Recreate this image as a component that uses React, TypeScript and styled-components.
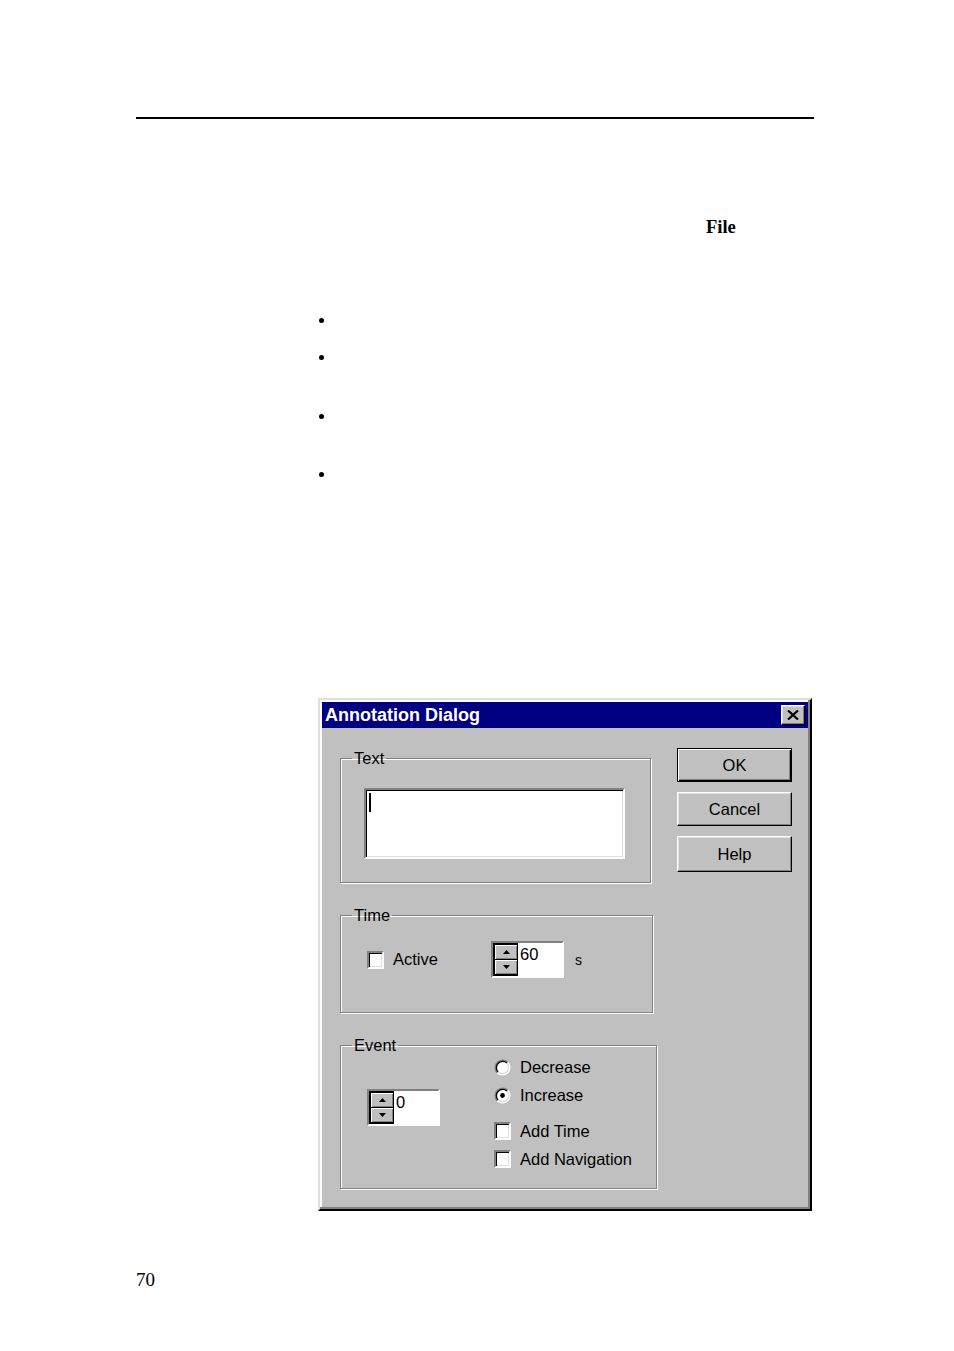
import React from 'react';
import styled, { createGlobalStyle, css } from 'styled-components';

const GlobalStyle = createGlobalStyle`
  html, body {
    margin: 0;
    padding: 0;
    background: #fff;
  }
  body {
    font-family: "Liberation Serif", "Times New Roman", serif;
  }
`;

const Page = styled.div`
  width: 954px;
  min-height: 1351px;
  padding-left: 136px;
  box-sizing: border-box;
  display: flex;
  flex-direction: column;
  align-items: flex-start;
`;

const HeaderRule = styled.hr`
  margin: 117px 0 0;
  width: 678px;
  height: 2px;
  border: none;
  background: #000;
`;

const MenuRef = styled.p`
  margin: 98px 0 0 570px;
  font: bold 18.5px/20px "Liberation Serif", "Times New Roman", serif;
  color: #000;
`;

const BulletList = styled.ul`
  list-style: none;
  margin: 0 0 0 183px;
  padding: 0;
  display: flex;
  flex-direction: column;
`;

const Bullet = styled.li<{ $top: number }>`
  width: 5px;
  height: 5px;
  border-radius: 50%;
  background: #000;
  margin-top: ${(p) => p.$top}px;
`;

const PageNumber = styled.p`
  margin: 59px 0 0;
  font: 19px/20px "Liberation Serif", "Times New Roman", serif;
  color: #000;
`;

/* ---- dialog ---- */

const Dialog = styled.div`
  margin: 221px 0 0 182px;
  width: 494px;
  height: 513px;
  box-sizing: border-box;
  border: 2px solid;
  border-color: #dfdfdf #000 #000 #dfdfdf;
  padding: 2px;
  background: #c0c0c0;
  box-shadow: inset -2px -2px 0 #808080, inset 2px 2px 0 #fff;
  display: flex;
  flex-direction: column;
  font-family: "Liberation Sans", Arial, sans-serif;
  font-size: 16.5px;
  color: #000;
`;

const TitleBar = styled.div`
  height: 26px;
  flex: none;
  background: #000080;
  display: flex;
  align-items: center;
  justify-content: space-between;
  padding: 0 3px 0 3px;
`;

const TitleText = styled.span`
  font: bold 18px/26px "Liberation Sans", Arial, sans-serif;
  color: #fff;
`;

const raised = css`
  background: #c0c0c0;
  border: 1px solid;
  border-color: #fff #000 #000 #fff;
  box-shadow: inset -1px -1px 0 #808080, inset 1px 1px 0 #dfdfdf;
`;

const CloseButton = styled.div`
  ${raised};
  width: 24px;
  height: 20px;
  box-sizing: border-box;
  display: flex;
  align-items: center;
  justify-content: center;
`;

const Body = styled.div`
  flex: 1;
  display: flex;
  padding: 20px 0 0 18px;
`;

const LeftColumn = styled.div`
  display: flex;
  flex-direction: column;
  gap: 22px;
  width: 317px;
`;

const GroupBox = styled.fieldset<{ $width: number }>`
  width: ${(p) => p.$width}px;
  box-sizing: border-box;
  margin: 0;
  padding: 0;
  min-width: 0;
  border: 1px solid #808080;
  box-shadow: inset 1px 1px 0 #fff, 1px 1px 0 #fff;
`;

const GroupLabel = styled.legend`
  margin-left: 11px;
  padding: 0 2px;
  line-height: 20px;
  font-size: 16.5px;
`;

const GroupContent = styled.div<{ $pad: string; $center?: boolean }>`
  padding: ${(p) => p.$pad};
  display: flex;
  ${(p) => p.$center && 'align-items: center;'}
`;

const sunken = css`
  border: 2px solid;
  border-color: #808080 #fff #fff #808080;
  box-shadow: inset 1px 1px 0 #000, inset -1px -1px 0 #dfdfdf;
`;

const TextEntry = styled.div`
  ${sunken};
  width: 261px;
  height: 71px;
  box-sizing: border-box;
  background: #fff;
  padding: 3px 0 0 3px;
`;

const Caret = styled.div`
  width: 2px;
  height: 19px;
  background: #000;
`;

const CheckItem = styled.div<{ $width?: number }>`
  display: flex;
  align-items: center;
  gap: 9px;
  height: 18px;
  ${(p) => p.$width && `width: ${p.$width}px;`}
  flex: none;
  white-space: nowrap;
`;

const CheckBox = styled.div`
  ${sunken};
  width: 17px;
  height: 18px;
  box-sizing: border-box;
  background: #fff;
  flex: none;
`;

const Spinner = styled.div`
  display: flex;
  width: 73px;
  height: 37px;
  box-sizing: border-box;
  border: 2px solid;
  border-color: #808080 #fff #fff #808080;
  background: #fff;
  flex: none;
`;

const SpinButtons = styled.div`
  display: flex;
  flex-direction: column;
  width: 25px;
  box-sizing: border-box;
  border: 2px solid #000;
  border-right-width: 1px;
  background: #000;
  gap: 1px;
`;

const SpinButton = styled.div`
  flex: 1;
  display: flex;
  align-items: center;
  justify-content: center;
  background: #c0c0c0;
  box-shadow: inset 1px 1px 0 #fff, inset -1px -1px 0 #808080;
`;

const SpinValue = styled.div`
  flex: 1;
  padding: 1px 0 0 2px;
  line-height: 20px;
  font-size: 16.5px;
`;

const Unit = styled.span`
  margin-left: 11px;
  font-size: 14px;
`;

const SpinSlot = styled.div`
  margin-top: 31px;
`;

const Options = styled.div`
  margin-left: 54px;
  display: flex;
  flex-direction: column;
  gap: 18px;
`;

const OptionGroup = styled.div`
  display: flex;
  flex-direction: column;
  gap: 10px;
`;

const ButtonColumn = styled.div`
  margin-left: 20px;
  display: flex;
  flex-direction: column;
  gap: 10px;
`;

const DialogButton = styled.div<{ $height: number; $default?: boolean }>`
  ${raised};
  width: 115px;
  height: ${(p) => p.$height}px;
  box-sizing: border-box;
  display: flex;
  align-items: center;
  justify-content: center;
  font-size: 16.5px;
  ${(p) =>
    p.$default &&
    css`
      border: 1px solid #000;
      box-shadow: inset 1px 1px 0 #fff, inset -1px -1px 0 #000,
        inset -2px -2px 0 #808080;
    `}
`;

const Arrow = ({ up }: { up?: boolean }) => (
  <svg width="7" height="4" viewBox="0 0 7 4">
    <path d={up ? 'M3.5 0 L7 4 L0 4 Z' : 'M0 0 L7 0 L3.5 4 Z'} fill="#000" />
  </svg>
);

const SpinBox = ({ value }: { value: string }) => (
  <Spinner>
    <SpinButtons>
      <SpinButton>
        <Arrow up />
      </SpinButton>
      <SpinButton>
        <Arrow />
      </SpinButton>
    </SpinButtons>
    <SpinValue>{value}</SpinValue>
  </Spinner>
);

const Radio = ({ checked }: { checked?: boolean }) => (
  <svg width="17" height="17" viewBox="0 0 17 17" style={{ flex: 'none' }}>
    <circle cx="8.5" cy="8.5" r="6" fill="#fff" />
    <path d="M3.2 13.8 A7.5 7.5 0 0 1 13.8 3.2" stroke="#808080" strokeWidth="1.5" fill="none" />
    <path d="M13.8 3.2 A7.5 7.5 0 0 1 3.2 13.8" stroke="#fff" strokeWidth="1.5" fill="none" />
    <path d="M4.05 12.95 A6.3 6.3 0 0 1 12.95 4.05" stroke="#000" strokeWidth="1.3" fill="none" />
    <path d="M12.95 4.05 A6.3 6.3 0 0 1 4.05 12.95" stroke="#dfdfdf" strokeWidth="1.3" fill="none" />
    {checked && <circle cx="8.5" cy="8.5" r="2.4" fill="#000" />}
  </svg>
);

const bulletTops = [81, 32, 54, 53];

export default function App() {
  return (
    <>
      <GlobalStyle />
      <Page>
        <HeaderRule />
        <MenuRef>File</MenuRef>
        <BulletList>
          {bulletTops.map((top, i) => (
            <Bullet key={i} $top={top} />
          ))}
        </BulletList>

        <Dialog>
          <TitleBar>
            <TitleText>Annotation Dialog</TitleText>
            <CloseButton>
              <svg width="12" height="10" viewBox="0 0 12 10">
                <path d="M1 0.5 L11 9.5 M11 0.5 L1 9.5" stroke="#000" strokeWidth="2.2" />
              </svg>
            </CloseButton>
          </TitleBar>
          <Body>
            <LeftColumn>
              <GroupBox $width={311}>
                <GroupLabel>Text</GroupLabel>
                <GroupContent $pad="20px 0 23px 23px">
                  <TextEntry>
                    <Caret />
                  </TextEntry>
                </GroupContent>
              </GroupBox>

              <GroupBox $width={313}>
                <GroupLabel>Time</GroupLabel>
                <GroupContent $pad="16px 0 34px 26px" $center>
                  <CheckItem $width={124}>
                    <CheckBox />
                    Active
                  </CheckItem>
                  <SpinBox value="60" />
                  <Unit>s</Unit>
                </GroupContent>
              </GroupBox>

              <GroupBox $width={317}>
                <GroupLabel>Event</GroupLabel>
                <GroupContent $pad="3px 0 20px 26px">
                  <SpinSlot>
                    <SpinBox value="0" />
                  </SpinSlot>
                  <Options>
                    <OptionGroup>
                      <CheckItem>
                        <Radio />
                        Decrease
                      </CheckItem>
                      <CheckItem>
                        <Radio checked />
                        Increase
                      </CheckItem>
                    </OptionGroup>
                    <OptionGroup>
                      <CheckItem>
                        <CheckBox />
                        Add Time
                      </CheckItem>
                      <CheckItem>
                        <CheckBox />
                        Add Navigation
                      </CheckItem>
                    </OptionGroup>
                  </Options>
                </GroupContent>
              </GroupBox>
            </LeftColumn>

            <ButtonColumn>
              <DialogButton $height={34} $default>
                OK
              </DialogButton>
              <DialogButton $height={34}>Cancel</DialogButton>
              <DialogButton $height={36}>Help</DialogButton>
            </ButtonColumn>
          </Body>
        </Dialog>

        <PageNumber>70</PageNumber>
      </Page>
    </>
  );
}
